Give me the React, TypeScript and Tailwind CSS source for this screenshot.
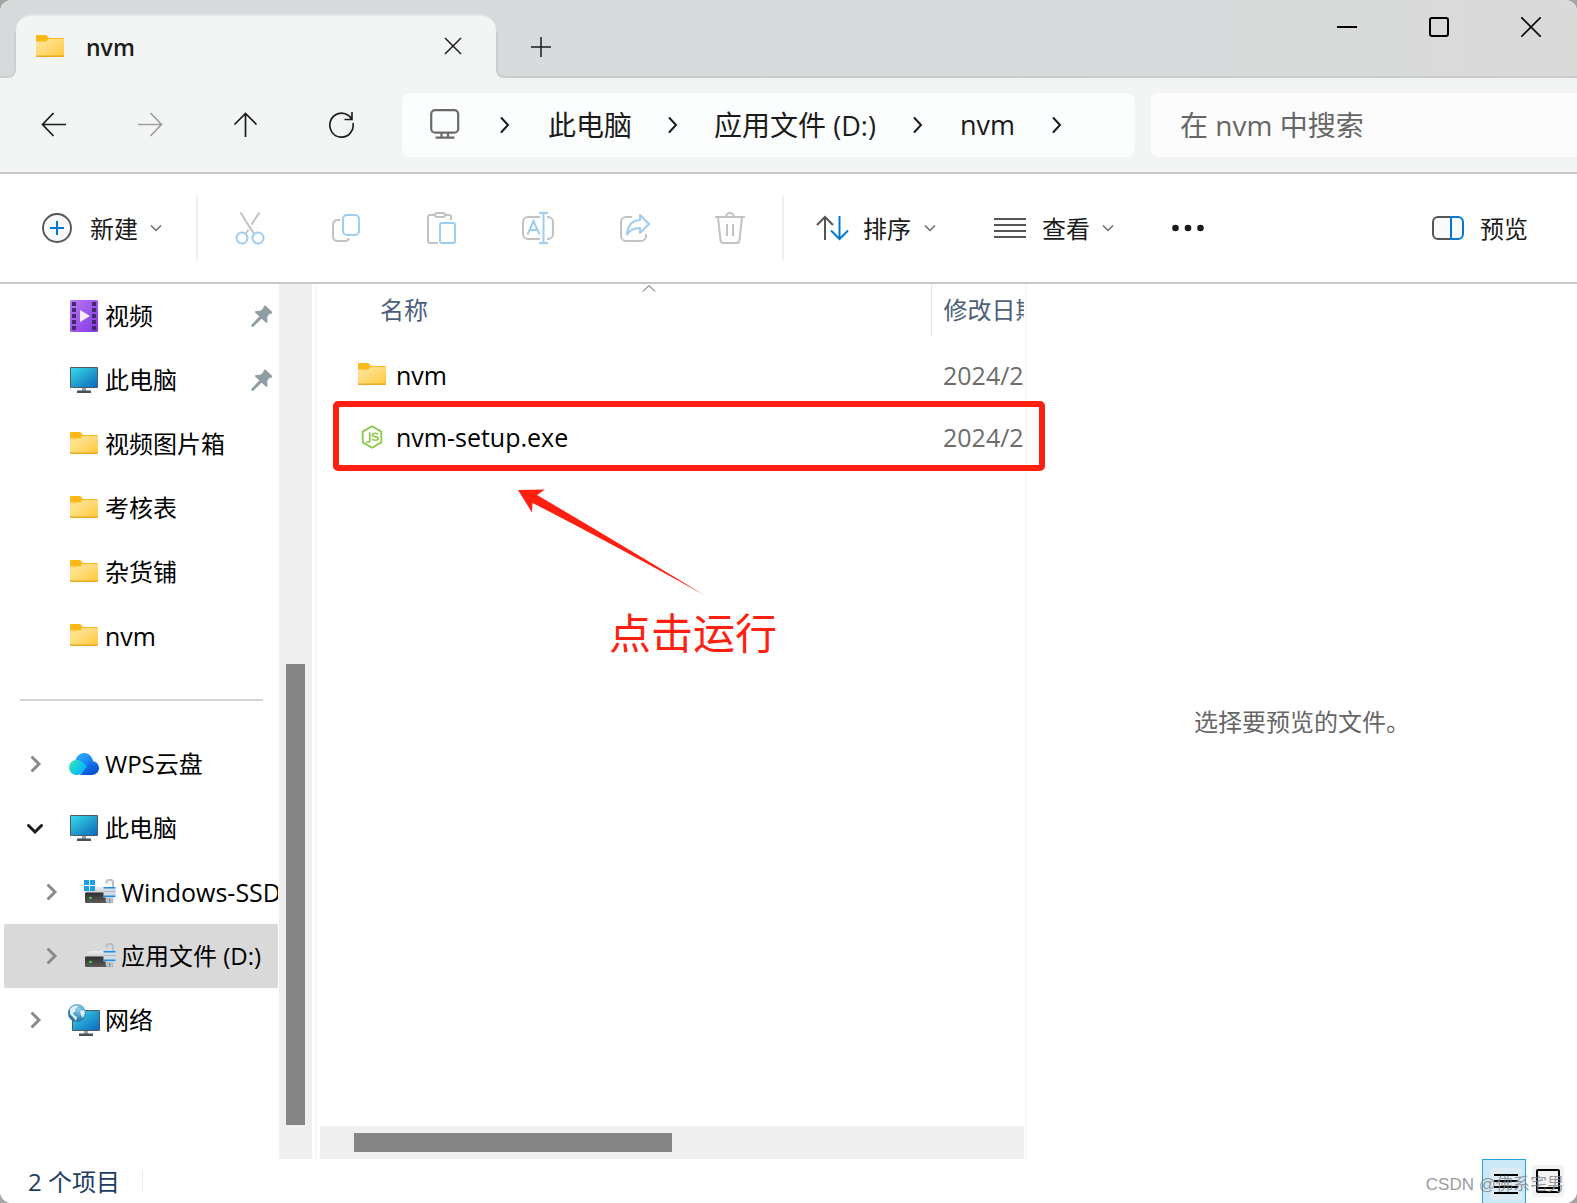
import React from 'react';

type IconProps = { className?: string };

function FolderIcon({ className = '' }: IconProps) {
  return (
    <svg width="28" height="22" viewBox="0 0 28 22" className={className} aria-hidden="true">
      <defs>
        <linearGradient id="folderFront" x1="0" y1="0" x2="1" y2="1">
          <stop offset="0" stopColor="#ffe7a2" />
          <stop offset="0.5" stopColor="#ffd974" />
          <stop offset="1" stopColor="#ffc938" />
        </linearGradient>
      </defs>
      <path d="M0 1a1 1 0 0 1 1-1h8.5a2 2 0 0 1 1.600.8L13 3h14a1 1 0 0 1 1 1v4H0z" fill="#fbb917" />
      <path d="M0 6.500h9.500a2 2 0 0 0 1.500-.7L12.500 4H28v17a1 1 0 0 1-1 1H1a1 1 0 0 1-1-1z" fill="url(#folderFront)" />
      <path d="M0 20.500h28v.5a1 1 0 0 1-1 1H1a1 1 0 0 1-1-1z" fill="#eea924" />
    </svg>
  );
}

function MonitorIcon() {
  return (
    <svg width="28" height="26" viewBox="0 0 28 26" aria-hidden="true">
      <defs>
        <linearGradient id="screen" x1="0" y1="0" x2="1" y2="1">
          <stop offset="0" stopColor="#36dce6" />
          <stop offset="0.5" stopColor="#22a0d2" />
          <stop offset="1" stopColor="#0f6abf" />
        </linearGradient>
      </defs>
      <path d="M12 20h4v4h-4z" fill="#9aa3ab" />
      <path d="M7 23.500h14V26H7z" fill="#444f5a" />
      <rect width="28" height="21" rx="1" fill="#4f5a65" />
      <rect x="1" y="1" width="26" height="19" fill="url(#screen)" />
    </svg>
  );
}

function VideoIcon() {
  return (
    <svg width="28" height="32" viewBox="0 0 28 32" aria-hidden="true">
      <defs>
        <linearGradient id="film" x1="0" y1="0" x2="1" y2="1">
          <stop offset="0" stopColor="#b779f4" />
          <stop offset="1" stopColor="#8437e2" />
        </linearGradient>
      </defs>
      <rect width="28" height="32" rx="1.500" fill="url(#film)" />
      {[2, 8, 14, 20, 26].map((y) => (
        <g key={y} fill="#43296b">
          <rect x="2" y={y} width="4" height="4" />
          <rect x="22" y={y} width="4" height="4" />
        </g>
      ))}
      <path d="M10 10v12l10-6z" fill="#f3eefb" />
    </svg>
  );
}

function CloudIcon() {
  return (
    <svg width="30" height="22" viewBox="0 0 30 22" aria-hidden="true">
      <defs>
        <linearGradient id="cloudBack" x1="0" y1="0" x2="1" y2="1">
          <stop offset="0" stopColor="#2fb4ff" />
          <stop offset="1" stopColor="#0a6be8" />
        </linearGradient>
        <linearGradient id="cloudLeft" x1="0" y1="0.2" x2="1" y2="0.8">
          <stop offset="0" stopColor="#41e8a6" />
          <stop offset="0.5" stopColor="#12c8e8" />
          <stop offset="1" stopColor="#08a8ff" />
        </linearGradient>
        <linearGradient id="cloudRight" x1="0" y1="0" x2="0.6" y2="1">
          <stop offset="0" stopColor="#1c86f4" />
          <stop offset="1" stopColor="#0751cf" />
        </linearGradient>
      </defs>
      <path d="M6 9C7 3.500 10.500 0 15 0c4.600 0 8 3.300 9 8l-5 9H8z" fill="url(#cloudBack)" />
      <path d="M22.500 8C26.700 8 30 11 30 15s-3.200 7-7.200 7H11l7-9c1.200-3 2.500-5 4.500-5z" fill="url(#cloudRight)" />
      <path d="M7.500 7c5 0 7 3 10.500 6.500L12.500 20c-1 1.300-2.200 2-4 2H7.500C3.400 22 0 18.700 0 14.500S3.400 7 7.500 7z" fill="url(#cloudLeft)" />
    </svg>
  );
}

function DriveIcon({ system = false }: { system?: boolean }) {
  return (
    <svg width="32" height="26" viewBox="0 0 32 26" aria-hidden="true">
      <defs>
        <linearGradient id="driveTop" x1="0" y1="0" x2="0" y2="1">
          <stop offset="0" stopColor="#eceef0" />
          <stop offset="1" stopColor="#c9ccd0" />
        </linearGradient>
        <linearGradient id="driveFace" x1="0" y1="0" x2="0" y2="1">
          <stop offset="0" stopColor="#2f2f2f" />
          <stop offset="1" stopColor="#5a5a5a" />
        </linearGradient>
      </defs>
      <path d="M6 8h20l4 6H1z" fill="url(#driveTop)" />
      <rect x="1" y="13.500" width="28" height="10.500" rx="1" fill="url(#driveFace)" />
      <circle cx="6.500" cy="19" r="1.300" fill="#3ee04a" />
      {system && <path d="M0 1h5v5H0zM6 1h5v5H6zM0 7h5v5H0zM6 7h5v5H6z" fill="#1a9fe8" />}
      <path d="M22.500 4.500V4c0-2 1.300-3.200 3.300-3.200S29 2 29 4v5" fill="none" stroke="#b4bfcc" strokeWidth="2" />
      <circle cx="25.500" cy="20.500" r="4" fill="#b9c1c9" />
      <rect x="19.500" y="8" width="12" height="10.500" fill="#d3dbe4" />
      <path d="M19.500 8h12v1.500h-12zM19.500 16.500h12V18h-12z" fill="#1f8fe6" />
      <path d="M19.500 12h12v1h-12z" fill="#aeb9c5" />
      <path d="M25 20h1.200v4H25z" fill="#848d96" />
    </svg>
  );
}

function NetworkIcon() {
  return (
    <svg width="32" height="32" viewBox="0 0 32 32" aria-hidden="true">
      <defs>
        <radialGradient id="globe" cx="0.6" cy="0.3" r="0.8">
          <stop offset="0" stopColor="#8fd0ee" />
          <stop offset="0.6" stopColor="#3a8fbd" />
          <stop offset="1" stopColor="#1f5f88" />
        </radialGradient>
      </defs>
      <path d="M16 27h4v3h-4z" fill="#9aa3ab" />
      <path d="M11 29.500h14V32H11z" fill="#444f5a" />
      <rect x="4" y="6" width="28" height="21" rx="1" fill="#4f5a65" />
      <rect x="5" y="7" width="26" height="19" fill="url(#screen)" />
      <circle cx="9" cy="9" r="9" fill="url(#globe)" />
      <path d="M2 5c2-3 5-4 8-3.500L9 4 7 5l1 2-3 2 1 2 3 2-1 4-3-4-3-3zM12 7l4-1 1 3-2 5-2-3z" fill="#dff0f6" />
    </svg>
  );
}

function PinIcon() {
  return (
    <svg width="22" height="22" viewBox="0 0 22 22" className="mr-[5px] ml-auto" aria-label="已固定">
      <path
        d="M13 1c.600-.7 1.400-.7 2 0l5.800 5.600c.7.700.6 1.400-.3 1.800l-2.700 1.200-1.600 2.600.3 4.600c0 1-.9 1.400-1.600.7L10.500 13.800 2.600 21.400.2 21.900l.4-2.400 7.700-7.900L4.400 7.700c-.7-.7-.4-1.600.6-1.700l4.500-.3 2.300-2z"
        fill="#919da4"
      />
    </svg>
  );
}

function ChevronRight({ className = '' }: IconProps) {
  return (
    <svg width="10" height="18" viewBox="0 0 10 18" fill="none" className={className} aria-hidden="true">
      <path d="M1.500 2l6.500 7-6.500 7" stroke="currentColor" strokeWidth="2" strokeLinecap="round" />
    </svg>
  );
}

function SmallChevronDown() {
  return (
    <svg width="12" height="8" viewBox="0 0 12 8" fill="none" stroke="#6a6a6a" strokeWidth="1.500" aria-hidden="true">
      <path d="M1 1.500l5 5 5-5" />
    </svg>
  );
}

function TreeChevron({ open = false }: { open?: boolean }) {
  return open ? (
    <svg width="16" height="16" viewBox="0 0 16 16" fill="none" aria-hidden="true">
      <path d="M1.500 5.500L8 12l6.500-6.500" stroke="#1b1b1b" strokeWidth="3" strokeLinecap="round" />
    </svg>
  ) : (
    <svg width="16" height="16" viewBox="0 0 16 16" fill="none" aria-hidden="true">
      <path d="M5.500 1.500L12 8l-6.500 6.500" stroke="#8a8a8a" strokeWidth="3" strokeLinecap="round" />
    </svg>
  );
}

function NodeIcon() {
  return (
    <svg width="22" height="24" viewBox="0 0 22 24" fill="none" stroke="#8cc84b" aria-hidden="true">
      <path d="M11 1.200l9.300 5.400v10.800L11 22.800l-9.300-5.400V6.600z" strokeWidth="1.800" strokeLinejoin="round" />
      <path d="M8.800 7.500v8c0 1.700-1.800 2-3.300 1.200" strokeWidth="1.800" />
      <path d="M17 9.300c-.8-1.300-5.500-1.700-5.500.6 0 2.600 5.800 1 5.800 3.700 0 2.300-5.500 2.100-6.200.1" strokeWidth="1.700" />
    </svg>
  );
}

const GREY = '#c2c2c2';
const PALE = '#9fcdf0';

const CutIcon = () => (
  <svg width="30" height="34" viewBox="0 0 30 34" fill="none" strokeWidth="2" aria-hidden="true">
    <path d="M5.500 1.500L19 23M24.500 1.500l-8 12M13.500 18.500L10.500 23" stroke={GREY} />
    <circle cx="7" cy="27" r="5.500" stroke={PALE} />
    <circle cx="23" cy="27" r="5.500" stroke={PALE} />
  </svg>
);
const CopyIcon = () => (
  <svg width="30" height="34" viewBox="0 0 30 34" fill="none" strokeWidth="2" aria-hidden="true">
    <path d="M9 9H6.500A4.500 4.500 0 0 0 2 13.500v12A4.500 4.500 0 0 0 6.500 30H14a4 4 0 0 0 4-3" stroke={GREY} />
    <rect x="12" y="4" width="16" height="20" rx="4" stroke={PALE} />
  </svg>
);
const PasteIcon = () => (
  <svg width="30" height="34" viewBox="0 0 30 34" fill="none" strokeWidth="2" aria-hidden="true">
    <path d="M7 4H3a2 2 0 0 0-2 2v24a2 2 0 0 0 2 2h8M18 4h4a2 2 0 0 1 2 2v3" stroke={GREY} />
    <rect x="8" y="2" width="10" height="4" rx="2" stroke={GREY} />
    <rect x="13" y="12" width="15" height="20" rx="2" stroke={PALE} />
  </svg>
);
const RenameIcon = () => (
  <svg width="34" height="34" viewBox="0 0 34 34" fill="none" strokeWidth="2" aria-hidden="true">
    <path d="M19 6H7a5 5 0 0 0-5 5v12a5 5 0 0 0 5 5h12M26 6h1a5 5 0 0 1 5 5v12a5 5 0 0 1-5 5h-1" stroke={GREY} />
    <path d="M6.500 23.500L12.500 10l6 13.500M8.500 19h8M22.500 2v30M18 2h9M18 32h9" stroke={PALE} />
  </svg>
);
const ShareIcon = () => (
  <svg width="32" height="34" viewBox="0 0 32 34" fill="none" strokeWidth="2" aria-hidden="true">
    <path d="M14 6H8a5 5 0 0 0-5 5v14a5 5 0 0 0 5 5h15a5 5 0 0 0 5-5v-2" stroke={GREY} />
    <path d="M22 4l9 9-9 9v-5C16 17 12 18.500 9 23.500 9.500 15 14 9.500 22 9z" stroke={PALE} strokeLinejoin="round" />
  </svg>
);
const TrashIcon = () => (
  <svg width="30" height="34" viewBox="0 0 30 34" fill="none" stroke={GREY} strokeWidth="2" aria-hidden="true">
    <path d="M0 6h30M11 6a4 4 0 0 1 8 0M3 6l2.500 23a3 3 0 0 0 3 3h13a3 3 0 0 0 3-3L27 6M12 13v12M18 13v12" />
  </svg>
);

const tools = [
  { label: '剪切', icon: <CutIcon /> },
  { label: '复制', icon: <CopyIcon /> },
  { label: '粘贴', icon: <PasteIcon /> },
  { label: '重命名', icon: <RenameIcon /> },
  { label: '共享', icon: <ShareIcon /> },
  { label: '删除', icon: <TrashIcon /> },
];

function TitleBar() {
  return (
    <header className="flex h-[78px] shrink-0 bg-[#f3f5f4]">
      <div className="flex w-4 shrink-0 flex-col">
        <div className="h-8 bg-[#d7dada]" />
        <div className="flex-1 rounded-br-lg border-r-2 border-b-2 border-[#cdcfcf] bg-[#d7dada]" />
      </div>
      <div className="w-[480px] bg-[linear-gradient(#d7dbdc_32px,#f3f5f4_32px)] pt-[14px]">
        <div className="flex h-full items-center rounded-t-2xl border-t-2 border-[#e3e6e6] bg-[#f3f5f4] pr-[34px] pl-5">
          <FolderIcon className="mb-[2px]" />
          <span className="ml-[22px] text-[23px] leading-8 font-semibold text-[#1b1b1b]">nvm</span>
          <button type="button" aria-label="关闭标签页" className="mb-[3px] ml-auto">
            <svg width="18" height="18" viewBox="0 0 18 18" stroke="#1b1b1b" strokeWidth="1.500" aria-hidden="true">
              <path d="M1 1l16 16M17 1L1 17" />
            </svg>
          </button>
        </div>
      </div>
      <div className="flex w-[10px] shrink-0 flex-col">
        <div className="h-8 bg-[#d7dbdc]" />
        <div className="flex-1 rounded-bl-lg border-b-2 border-l-2 border-[#cbcdcd] bg-[#d7dbdc]" />
      </div>
      <div className="flex flex-1 items-center border-b-2 border-[#cbcdcd] bg-linear-to-r from-[#d7dbdc] via-[#d7dbdc] to-[#dadad9]">
        <button type="button" aria-label="新建标签页" className="mt-[18px] ml-[25px]">
          <svg width="20" height="20" viewBox="0 0 20 20" stroke="#1b1b1b" strokeWidth="1.500" aria-hidden="true">
            <path d="M10 0v20M0 10h20" />
          </svg>
        </button>
        <div className="mr-9 ml-auto flex gap-[72px] self-start pt-[17px]">
          <button type="button" aria-label="最小化">
            <svg width="20" height="20" viewBox="0 0 20 20" stroke="#000" strokeWidth="2" aria-hidden="true">
              <path d="M0 10h20" />
            </svg>
          </button>
          <button type="button" aria-label="最大化">
            <svg width="20" height="20" viewBox="0 0 20 20" fill="none" stroke="#000" strokeWidth="2" aria-hidden="true">
              <rect x="1" y="1" width="18" height="18" rx="2" />
            </svg>
          </button>
          <button type="button" aria-label="关闭">
            <svg width="20" height="20" viewBox="0 0 20 20" stroke="#111" strokeWidth="1.800" aria-hidden="true">
              <path d="M0 0l20 20M20 0L0 20" />
            </svg>
          </button>
        </div>
      </div>
    </header>
  );
}

const navButton = 'flex h-16 w-24 items-center justify-center';

function NavBar() {
  return (
    <nav className="flex shrink-0 items-center border-b-2 border-[#c8c8c8] bg-[#f3f4f4] pt-[15px] pb-[15px] pl-[6px]">
      <button type="button" aria-label="后退" className={navButton}>
        <svg width="26" height="26" viewBox="0 0 26 26" fill="none" stroke="#1b1b1b" strokeWidth="1.700" aria-hidden="true">
          <path d="M25 12.500H1.500M12.500 1L1.500 12.500 12.500 24" />
        </svg>
      </button>
      <button type="button" aria-label="前进" disabled className={navButton}>
        <svg width="26" height="26" viewBox="0 0 26 26" fill="none" stroke="#9f9f9f" strokeWidth="1.700" aria-hidden="true">
          <path d="M1 12.500h23.500M13.500 1l11 11.500-11 11.500" />
        </svg>
      </button>
      <button type="button" aria-label="向上" className={navButton}>
        <svg width="26" height="26" viewBox="0 0 26 26" fill="none" stroke="#1b1b1b" strokeWidth="1.700" aria-hidden="true">
          <path d="M12.500 25V1.500M1.500 12.500l11-11 11 11" />
        </svg>
      </button>
      <button type="button" aria-label="刷新" className={navButton}>
        <svg width="26" height="26" viewBox="0 0 26 26" fill="none" stroke="#1b1b1b" strokeWidth="1.600" aria-hidden="true">
          <path d="M24 10.800A11.700 12 0 1 1 19.500 3.500Q22 5 23 8M23 0v7.500h-7.500" />
        </svg>
      </button>
      <div className="ml-3 flex h-16 flex-1 items-center rounded-lg bg-[#fcfdfd] pl-7 text-[28px] leading-10 text-[#1b1b1b]">
        <svg width="30" height="30" viewBox="0 0 30 30" fill="none" stroke="#6a6a6a" strokeWidth="2.200" className="mb-[2px]" aria-hidden="true">
          <rect x="1.200" y="1.200" width="27" height="22.500" rx="4" />
          <path d="M11.500 24v4M18 24v4M5.500 28.700h19" />
        </svg>
        <ChevronRight className="ml-10" />
        <button type="button" className="ml-[38px]">此电脑</button>
        <ChevronRight className="ml-9" />
        <button type="button" className="ml-9 whitespace-nowrap">
          应用文件 <span className="text-[27px]">(D:)</span>
        </button>
        <ChevronRight className="ml-[37px]" />
        <button type="button" className="ml-[37px] text-[27px]">nvm</button>
        <ChevronRight className="ml-[37px]" />
      </div>
      <input
        type="search"
        aria-label="在 nvm 中搜索"
        placeholder="在 nvm 中搜索"
        className="ml-4 h-16 w-[426px] rounded-l-lg bg-[#fcfcfc] px-[29px] text-[28px] outline-none placeholder:text-[#666666]"
      />
    </nav>
  );
}

function ToolBar() {
  return (
    <div className="flex shrink-0 items-center border-b-2 border-[#c8c8c8] bg-white py-[22px] text-2xl leading-8 text-[#1b1b1b]">
      <button type="button" className="ml-[42px] flex items-center">
        <svg width="30" height="30" viewBox="0 0 30 30" fill="none" className="mb-px" aria-hidden="true">
          <circle cx="15" cy="15" r="14" fill="#fafafa" stroke="#555" strokeWidth="1.900" />
          <path d="M15 8v14M8 15h14" stroke="#0078d4" strokeWidth="2" />
        </svg>
        <span className="mt-[2px] ml-[18px]">新建</span>
        <span className="ml-3"><SmallChevronDown /></span>
      </button>
      <div className="ml-[34px] h-16 w-[2px] bg-[#efefef]" />
      <div className="flex w-[584px] justify-between px-[4px]">
        {tools.map((t) => (
          <button key={t.label} type="button" aria-label={t.label} disabled className="flex w-24 justify-center">
            {t.icon}
          </button>
        ))}
      </div>
      <div className="h-16 w-[2px] bg-[#efefef]" />
      <button type="button" className="ml-8 flex items-center">
        <svg width="33" height="26" viewBox="0 0 33 26" fill="none" strokeWidth="2" aria-hidden="true">
          <path d="M9 25V2M1 10l8-8 8 8" stroke="#555" />
          <path d="M23.500 1v23M15 15.500l8.500 8.500 8.500-8.500" stroke="#0078d4" />
        </svg>
        <span className="mt-[2px] ml-[14px]">排序</span>
        <span className="ml-[13px]"><SmallChevronDown /></span>
      </button>
      <button type="button" className="ml-[58px] flex items-center">
        <svg width="32" height="22" viewBox="0 0 32 22" stroke="#555" strokeWidth="2" aria-hidden="true">
          <path d="M0 2h32M0 8h32M0 14h32M0 20h32" />
        </svg>
        <span className="mt-[2px] ml-4">查看</span>
        <span className="ml-3"><SmallChevronDown /></span>
      </button>
      <button type="button" aria-label="更多" className="ml-[58px]">
        <svg width="32" height="8" viewBox="0 0 32 8" fill="#1b1b1b" aria-hidden="true">
          <circle cx="3.500" cy="4" r="3.300" />
          <circle cx="16" cy="4" r="3.300" />
          <circle cx="28.500" cy="4" r="3.300" />
        </svg>
      </button>
      <button type="button" className="mr-[49px] ml-auto flex items-center">
        <svg width="32" height="24" viewBox="0 0 32 24" fill="none" strokeWidth="2" aria-hidden="true">
          <path d="M19 1H6a5 5 0 0 0-5 5v12a5 5 0 0 0 5 5h13" stroke="#555" fill="#fafafa" />
          <path d="M19 1h7a5 5 0 0 1 5 5v12a5 5 0 0 1-5 5h-7z" stroke="#0078d4" fill="#fafafa" />
        </svg>
        <span className="mt-[2px] ml-4">预览</span>
      </button>
    </div>
  );
}

type TreeNode = {
  label: string;
  icon: React.ReactNode;
  pinned?: boolean;
  state?: 'open' | 'closed';
  nested?: boolean;
  selected?: boolean;
  latin?: boolean;
};

const quick: TreeNode[] = [
  { label: '视频', icon: <VideoIcon />, pinned: true },
  { label: '此电脑', icon: <MonitorIcon />, pinned: true },
  { label: '视频图片箱', icon: <FolderIcon className="mb-[2px]" /> },
  { label: '考核表', icon: <FolderIcon className="mb-[2px]" /> },
  { label: '杂货铺', icon: <FolderIcon className="mb-[2px]" /> },
  { label: 'nvm', icon: <FolderIcon className="mb-[2px]" />, latin: true },
];

const places: TreeNode[] = [
  { label: 'WPS云盘', icon: <CloudIcon />, state: 'closed' },
  { label: '此电脑', icon: <MonitorIcon />, state: 'open' },
  { label: 'Windows-SSD (C:)', icon: <DriveIcon system />, state: 'closed', nested: true, latin: true },
  { label: '应用文件 (D:)', icon: <DriveIcon />, state: 'closed', nested: true, selected: true },
  { label: '网络', icon: <NetworkIcon />, state: 'closed' },
];

function TreeRow({ node }: { node: TreeNode }) {
  return (
    <li className="px-1">
      <button
        type="button"
        aria-expanded={node.state ? node.state === 'open' : undefined}
        className={`flex h-16 w-[274px] items-center overflow-hidden rounded-[2px] text-left ${node.nested ? 'pl-[39px]' : 'pl-[23px]'} ${node.selected ? 'bg-[#d9d9d9]' : ''}`}
      >
        <span className="w-4 shrink-0">{node.state && <TreeChevron open={node.state === 'open'} />}</span>
        <span className="ml-[25px] flex w-8 shrink-0 justify-center">{node.icon}</span>
        <span className={`ml-[5px] whitespace-nowrap ${node.latin ? 'text-[25px]' : ''}`}>{node.label}</span>
        {node.pinned && <PinIcon />}
      </button>
    </li>
  );
}

function Sidebar() {
  return (
    <aside className="flex w-[312px] shrink-0">
      <div className="flex-1 overflow-hidden text-2xl leading-8 text-black">
        <ul>{quick.map((n) => <TreeRow key={n.label} node={n} />)}</ul>
        <div className="flex h-16 items-center pr-4 pl-5">
          <div className="h-[2px] w-full bg-[#d4d4d4]" />
        </div>
        <ul>{places.map((n) => <TreeRow key={n.label} node={n} />)}</ul>
      </div>
      <div className="flex w-[33px] flex-col items-center bg-[#efefef] pr-px">
        <div className="grow-[380]" />
        <div className="w-[19px] grow-[461] bg-[#858585]" />
        <div className="grow-[34]" />
      </div>
    </aside>
  );
}

const files = [
  { name: 'nvm', icon: <FolderIcon className="mb-px" />, date: '2024/2/2 10:15' },
  { name: 'nvm-setup.exe', icon: <NodeIcon />, date: '2024/2/2 10:12' },
];

function FileList() {
  return (
    <section className="relative flex min-w-0 flex-[710] flex-col border-r-2 border-[#f7f7f7] pl-[3px]">
      <div className="flex flex-1 flex-col border-l-2 border-[#f7f7f7] pr-px">
        <div className="flex-1 overflow-hidden">
          <table className="w-[1000px] table-fixed text-2xl leading-8">
            <colgroup>
              <col className="w-[614px]" />
              <col />
            </colgroup>
            <thead>
              <tr className="h-[52px] text-left text-[#4c607a]">
                <th className="border-r border-[#e5e5e5] pl-[63px] font-normal">名称</th>
                <th className="pl-3 font-normal">修改日期</th>
              </tr>
            </thead>
            <tbody>
              <tr aria-hidden="true" className="h-2"><td colSpan={2} /></tr>
              {files.map((f) => (
                <tr key={f.name} className="h-[62px]">
                  <td>
                    <span className="flex items-center pl-[41px]">
                      <span className="flex w-7 justify-center pb-px">{f.icon}</span>
                      <span className="ml-[10px] text-[25px] text-black">{f.name}</span>
                    </span>
                  </td>
                  <td className="pl-3 text-[25px] whitespace-nowrap text-[#6d6d6d]">{f.date}</td>
                </tr>
              ))}
            </tbody>
          </table>
        </div>
        <div className="ml-[3px] flex h-[33px] items-center bg-[#efefef]">
          <div className="grow-[34]" />
          <div className="h-[19px] grow-[318] bg-[#858585]" />
          <div className="grow-[352]" />
        </div>
      </div>
      <svg width="14" height="9" viewBox="0 0 14 9" fill="none" stroke="#555" className="absolute top-0 left-[330px]" aria-hidden="true">
        <path d="M1 7.500l6-6 6 6" />
      </svg>
      <div className="absolute top-[117px] right-[-20px] left-[21px] h-[70px] rounded-[5px] border-[6px] border-[#ff2011]" />
      <svg width="190" height="108" viewBox="0 0 190 108" className="absolute top-[205px] left-[205px]" aria-hidden="true">
        <path d="M1 1l27-.5-8 5.500Q90 47 188 106.500 90 52 15.500 14l-.5 9.500z" fill="#ff2011" />
      </svg>
      <p className="absolute top-[321px] left-[297px] text-[42px] leading-[56px] whitespace-nowrap text-[#ff2011]">点击运行</p>
    </section>
  );
}

function StatusBar() {
  return (
    <footer className="relative flex h-11 shrink-0 items-center bg-white pl-7">
      <span className="mt-[2px] text-2xl leading-8 text-[#1d3c63]">2 个项目</span>
      <div className="ml-[22px] h-[22px] w-px bg-[#ececec]" />
      <div className="mr-[13px] ml-auto flex h-full items-center gap-[6px]">
        <button type="button" aria-label="详细信息" className="flex h-full w-11 items-center justify-end border border-b-0 border-[#26a0da] bg-[#cbe8f6] pt-[5px] pr-[3px]">
          <svg width="32" height="32" viewBox="0 0 32 32" aria-hidden="true">
            <rect width="32" height="32" rx="3" fill="#dcebf6" />
            <path d="M4 7h24M4 13h24M4 19h24M4 25h24" stroke="#000" strokeWidth="2" />
          </svg>
        </button>
        <button type="button" aria-label="大图标">
          <svg width="32" height="32" viewBox="0 0 32 32" fill="none" aria-hidden="true">
            <rect width="32" height="32" rx="3" fill="#f3f3f3" />
            <rect x="5" y="5" width="22" height="22" rx="1" stroke="#000" strokeWidth="2" />
            <path d="M5 23h22" stroke="#000" strokeWidth="2" />
          </svg>
        </button>
      </div>
      <span className="absolute top-[14px] right-[13px] text-[17px] leading-6 whitespace-nowrap text-[#808080]/80 [font-family:'Liberation_Sans','Noto_Sans_CJK_SC',sans-serif]">
        CSDN @佛系宅男
      </span>
    </footer>
  );
}

export default function App() {
  return (
    <div className="min-h-screen bg-[#a5a5a5]">
      <div className="flex min-h-screen flex-col overflow-hidden rounded-xl bg-white [font-family:'Open_Sans','Noto_Sans_CJK_SC',sans-serif]">
        <TitleBar />
        <NavBar />
        <ToolBar />
        <main className="flex flex-1">
          <Sidebar />
          <FileList />
          <section className="flex flex-[550] items-center justify-center text-2xl leading-8 text-[#666666]">
            <p>选择要预览的文件。</p>
          </section>
        </main>
        <StatusBar />
      </div>
    </div>
  );
}
